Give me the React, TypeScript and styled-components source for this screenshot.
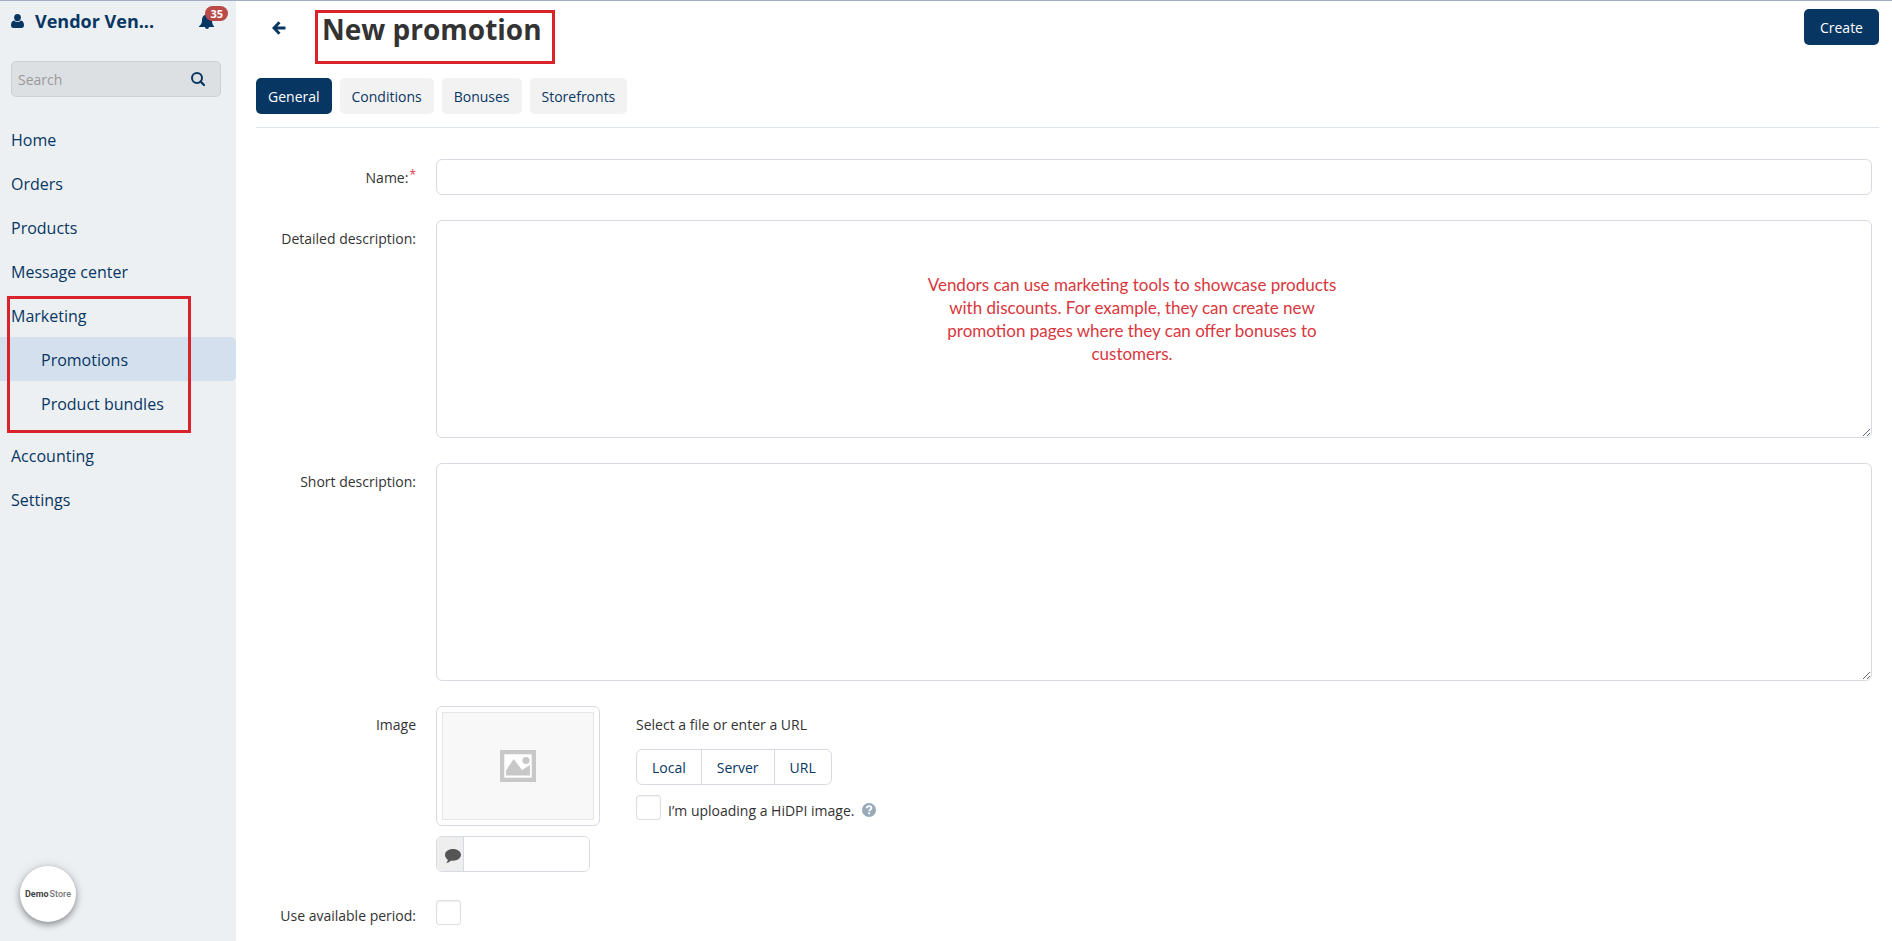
import React from "react";
import styled, { createGlobalStyle } from "styled-components";

const navy = "#083662";
const line = "#d5dbe0";
const red = "#d9222a";

const Global = createGlobalStyle`
  *, *::before, *::after { box-sizing: border-box; }
  body {
    margin: 0;
    background: #fff;
    color: #333;
    font-family: "Open Sans", "Noto Sans", sans-serif;
    font-size: 14px;
    line-height: 20px;
  }
  button, input, textarea { font: inherit; color: inherit; margin: 0; }
  h1, p { margin: 0; }
`;

const Page = styled.div`
  display: flex;
  min-height: 100vh;
  border-top: 1px solid #a3abc0;
`;

const Sidebar = styled.aside`
  position: relative;
  flex: 0 0 236px;
  min-width: 0;
  background: #ecf0f3;
  color: ${navy};
`;

const Account = styled.div`
  display: flex;
  align-items: center;
  height: 40px;
  padding: 0 8px 0 11px;
  gap: 11px;
  font-size: 18px;
  font-weight: 700;
`;

const AccountLink = styled.a`
  flex: 1;
  color: inherit;
  text-decoration: none;
`;

const BellButton = styled.button`
  position: relative;
  display: flex;
  padding: 0 13px 0 0;
  border: 0;
  background: none;
`;

const Count = styled.span`
  position: absolute;
  top: -7px;
  right: 0;
  padding: 0 5px;
  border-radius: 8px;
  background: #b94a48;
  color: #fff;
  font-size: 11px;
  line-height: 15px;
`;

const SearchBox = styled.label`
  display: flex;
  align-items: center;
  height: 36px;
  margin: 20px 15px 0 11px;
  padding: 0 15px 0 6px;
  border: 1px solid #cbd0d3;
  border-radius: 5px;
  background: #dce0e3;
`;

const SearchInput = styled.input`
  flex: 1;
  min-width: 0;
  padding: 2px 0 0;
  border: 0;
  outline: 0;
  background: none;
  &::placeholder { color: #999; opacity: 1; }
`;

const Nav = styled.nav`
  display: flex;
  flex-direction: column;
  margin-top: 20px;
  font-size: 16px;
`;

const NavLink = styled.a<{ $sub?: boolean; $active?: boolean }>`
  height: 44px;
  padding-left: ${(p) => (p.$sub ? 41 : 11)}px;
  border-radius: 0 5px 5px 0;
  background: ${(p) => (p.$active ? "#d5e0ee" : "transparent")};
  color: ${navy};
  line-height: 46px;
  text-decoration: none;
`;

const NavGroup = styled.div`
  position: relative;
  display: flex;
  flex-direction: column;
  margin-bottom: 8px;
`;

const Frame = styled.span<{ $inset: string }>`
  position: absolute;
  inset: ${(p) => p.$inset};
  border: 3px solid ${red};
  pointer-events: none;
`;

const StoreBadge = styled.a`
  position: absolute;
  left: 20px;
  bottom: 19px;
  display: flex;
  align-items: center;
  justify-content: center;
  gap: 1px;
  width: 56px;
  height: 56px;
  border-radius: 50%;
  background: #fff;
  box-shadow: 0 3px 6px rgba(0, 0, 0, 0.35), 0 0 12px rgba(0, 0, 0, 0.12);
  color: #777;
  font-family: Roboto, sans-serif;
  font-size: 9px;
  font-weight: 500;
  text-decoration: none;
  b { color: #444; }
`;

const Main = styled.main`
  flex: 1;
  min-width: 0;
  padding: 0 13px 15px 20px;
`;

const Header = styled.header`
  display: flex;
  align-items: flex-start;
  height: 77px;
  padding: 8px 0 0 16px;
`;

const BackLink = styled.a`
  display: flex;
  margin: 12px 36px 0 0;
  color: ${navy};
`;

const Title = styled.h1`
  position: relative;
  font-size: 28px;
  font-weight: 700;
  line-height: 40px;
`;

const CreateButton = styled.button`
  height: 36px;
  margin-left: auto;
  padding: 2px 16px 0;
  border: 0;
  border-radius: 5px;
  background: ${navy};
  color: #fff;
`;

const Tabs = styled.div`
  display: flex;
  gap: 8px;
  padding-bottom: 13px;
  border-bottom: 1px solid #dde4ea;
`;

const Tab = styled.button<{ $active?: boolean }>`
  height: 36px;
  padding: 2px 12px 0;
  border: 0;
  border-radius: 5px;
  background: ${(p) => (p.$active ? navy : "#f3f2f3")};
  color: ${(p) => (p.$active ? "#fff" : navy)};
`;

const Form = styled.form`
  display: grid;
  gap: 25px;
  padding: 31px 7px 0 0;
`;

const Row = styled.div`
  display: grid;
  grid-template-columns: 160px minmax(0, 1fr);
  column-gap: 20px;
`;

const Label = styled.label`
  padding-top: 9px;
  text-align: right;
  sup {
    margin-left: 1px;
    color: #e0394a;
    font-size: 12px;
    line-height: 0;
    vertical-align: 4px;
  }
`;

const TextInput = styled.input`
  width: 100%;
  height: 36px;
  padding: 0 8px;
  border: 1px solid ${line};
  border-radius: 6px;
`;

const AreaWrap = styled.div`
  position: relative;
  display: flex;
`;

const Area = styled.textarea`
  width: 100%;
  height: 218px;
  padding: 8px;
  border: 1px solid ${line};
  border-radius: 6px;
  resize: vertical;
`;

const Note = styled.p`
  position: absolute;
  top: 53px;
  left: 484px;
  width: 424px;
  color: #d8373e;
  font-family: Lato, sans-serif;
  font-size: 17px;
  line-height: 23px;
  text-align: center;
  pointer-events: none;
`;

const ImageField = styled.div`
  display: flex;
  align-items: flex-start;
  gap: 36px;
`;

const Stack = styled.div`
  display: flex;
  flex-direction: column;
  gap: 10px;
`;

const Thumb = styled.div`
  width: 164px;
  height: 120px;
  padding: 5px;
  border: 1px solid ${line};
  border-radius: 6px;
`;

const ThumbInner = styled.div`
  display: flex;
  align-items: center;
  justify-content: center;
  height: 100%;
  border: 1px solid #e6e6e6;
  background: #f8f8f8;
`;

const AltField = styled.label`
  display: flex;
  width: 154px;
  height: 36px;
  border: 1px solid ${line};
  border-radius: 6px;
  overflow: hidden;
`;

const AltIcon = styled.span`
  display: flex;
  align-items: center;
  justify-content: flex-end;
  width: 27px;
  padding: 3px 2px 0 0;
  border-right: 1px solid ${line};
  background: #eee;
`;

const AltInput = styled.input`
  flex: 1;
  min-width: 0;
  border: 0;
  outline: 0;
`;

const Caption = styled.p`
  padding: 9px 0 4px;
`;

const ButtonGroup = styled.div`
  display: flex;
  align-self: flex-start;
  border: 1px solid ${line};
  border-radius: 6px;
`;

const GroupButton = styled.button`
  height: 34px;
  padding: 2px 15px 0;
  border: 0;
  background: none;
  color: ${navy};
  & + & { border-left: 1px solid ${line}; }
`;

const Check = styled.input`
  appearance: none;
  width: 25px;
  height: 25px;
  border: 1px solid #dedede;
  border-radius: 3px;
  background: #fff;
  box-shadow: inset 0 1px 2px rgba(0, 0, 0, 0.06);
`;

const CheckLabel = styled.div`
  display: flex;
  align-items: flex-start;
  gap: 7px;
  label { padding-top: 6px; }
  svg { margin-top: 8px; }
`;

const PeriodCheck = styled(Check)`
  margin-top: 3px;
`;

const UserIcon = () => (
  <svg width="13" height="14" viewBox="0 0 13 14" fill={navy} aria-hidden="true">
    <ellipse cx="6.5" cy="3.6" rx="3.4" ry="3.6" />
    <path d="M3.1 6.4C1 6.8 0 8.6 0 11.2 0 13 .9 14 2.4 14h8.2c1.5 0 2.4-1 2.4-2.8 0-2.6-1-4.400-3.100-4.800a4.500 4.500 0 0 1-6.800 0z" />
  </svg>
);

const BellIcon = () => (
  <svg width="16" height="17" viewBox="0 0 16 17" fill={navy} aria-hidden="true">
    <path d="M8 0a1 1 0 0 0-1 1v.6C4.300 2.200 3 4.300 3 7c0 3.500-1.300 5-3 6.300V14h6a2 2 0 0 0 4 0h5v-.7C13.800 12 13 10.500 13 7c0-2.700-1.300-4.800-4-5.400V1a1 1 0 0 0-1-1z" />
  </svg>
);

const SearchIcon = () => (
  <svg width="14" height="14" viewBox="0 0 14 14" fill="none" stroke={navy} strokeWidth="2" aria-hidden="true">
    <circle cx="6" cy="6" r="5" />
    <path d="M9.500 9.500 13 13" strokeLinecap="round" strokeWidth="2.300" />
  </svg>
);

const ArrowIcon = () => (
  <svg width="14" height="14" viewBox="0 0 14 14" fill="none" stroke={navy} strokeWidth="2.800" aria-hidden="true">
    <path d="M7.500 1.200 1.900 7l5.600 5.800M2.500 7H13.500" />
  </svg>
);

const PictureIcon = () => (
  <svg width="36" height="32" viewBox="0 0 36 32" aria-hidden="true">
    <path fill="#c8c8c8" fillRule="evenodd" d="M0 0h36v32H0zM4.500 4.500v23h27v-23z" />
    <path fill="#fff" d="M4.500 4.500h27v23h-27z" />
    <path fill="#c8c8c8" d="M6 25.500v-5L13.700 9l8.300 11 8-5v10.500z" />
    <circle cx="26" cy="10.500" r="3.600" fill="#c8c8c8" />
  </svg>
);

const CommentIcon = () => (
  <svg width="16" height="14" viewBox="0 0 16 14" fill="#555" aria-hidden="true">
    <path d="M8 0c4.500 0 8 2.600 8 5.800s-3.500 5.900-8 5.900c-.7 0-1.400-.1-2-.2C4.700 12.900 3 13.700 1.200 14c.9-.9 1.500-1.900 1.600-3.300C1.100 9.600 0 7.800 0 5.800 0 2.600 3.500 0 8 0z" />
  </svg>
);

const HelpIcon = () => (
  <svg width="14" height="14" viewBox="0 0 14 14" role="img" aria-label="Help">
    <circle cx="7" cy="7" r="7" fill="#98a9ba" />
    <path d="M4.700 5.200c.1-1.300 1-2.100 2.400-2.100s2.300.8 2.300 1.900c0 1.700-2.200 1.600-2.200 3.300" fill="none" stroke="#fff" strokeWidth="1.900" />
    <path fill="#fff" d="M6.100 9.400h2.100v1.900H6.100z" />
  </svg>
);

const topLinks = ["Home", "Orders", "Products", "Message center"];
const tabs = ["General", "Conditions", "Bonuses", "Storefronts"];
const sources = ["Local", "Server", "URL"];

export default function App() {
  return (
    <>
      <Global />
      <Page>
        <Sidebar>
          <Account>
            <UserIcon />
            <AccountLink href="#account">Vendor Ven...</AccountLink>
            <BellButton type="button" aria-label="Notifications">
              <BellIcon />
              <Count>35</Count>
            </BellButton>
          </Account>
          <SearchBox>
            <SearchInput type="text" placeholder="Search" aria-label="Search" />
            <SearchIcon />
          </SearchBox>
          <Nav>
            {topLinks.map((name) => (
              <NavLink key={name} href="#nav">{name}</NavLink>
            ))}
            <NavGroup>
              <NavLink href="#marketing">Marketing</NavLink>
              <NavLink href="#promotions" $sub $active>Promotions</NavLink>
              <NavLink href="#bundles" $sub>Product bundles</NavLink>
              <Frame $inset="3px 45px -8px 7px" />
            </NavGroup>
            <NavLink href="#accounting">Accounting</NavLink>
            <NavLink href="#settings">Settings</NavLink>
          </Nav>
          <StoreBadge href="#store"><b>Demo</b>Store</StoreBadge>
        </Sidebar>
        <Main>
          <Header>
            <BackLink href="#back" aria-label="Back"><ArrowIcon /></BackLink>
            <Title>
              New promotion
              <Frame $inset="1px -13px -15px -7px" />
            </Title>
            <CreateButton type="button">Create</CreateButton>
          </Header>
          <Tabs>
            {tabs.map((name, i) => (
              <Tab key={name} type="button" $active={i === 0}>{name}</Tab>
            ))}
          </Tabs>
          <Form>
            <Row>
              <Label htmlFor="name">Name:<sup>*</sup></Label>
              <TextInput id="name" type="text" />
            </Row>
            <Row>
              <Label htmlFor="detailed">Detailed description:</Label>
              <AreaWrap>
                <Area id="detailed" />
                <Note>
                  Vendors can use marketing tools to showcase products with discounts. For example, they can
                  create new promotion pages where they can offer bonuses to customers.
                </Note>
              </AreaWrap>
            </Row>
            <Row>
              <Label htmlFor="short">Short description:</Label>
              <AreaWrap>
                <Area id="short" />
              </AreaWrap>
            </Row>
            <Row>
              <Label as="span">Image</Label>
              <ImageField>
                <Stack>
                  <Thumb><ThumbInner><PictureIcon /></ThumbInner></Thumb>
                  <AltField>
                    <AltIcon><CommentIcon /></AltIcon>
                    <AltInput type="text" aria-label="Alternative text" />
                  </AltField>
                </Stack>
                <Stack>
                  <Caption>Select a file or enter a URL</Caption>
                  <ButtonGroup>
                    {sources.map((name) => (
                      <GroupButton key={name} type="button">{name}</GroupButton>
                    ))}
                  </ButtonGroup>
                  <CheckLabel>
                    <Check id="hidpi" type="checkbox" />
                    <label htmlFor="hidpi">I’m uploading a HiDPI image.</label>
                    <HelpIcon />
                  </CheckLabel>
                </Stack>
              </ImageField>
            </Row>
            <Row>
              <Label htmlFor="period">Use available period:</Label>
              <PeriodCheck id="period" type="checkbox" />
            </Row>
          </Form>
        </Main>
      </Page>
    </>
  );
}
